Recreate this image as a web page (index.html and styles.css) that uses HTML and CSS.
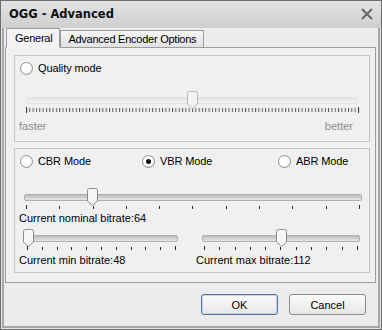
FILE: index.html
```html
<!DOCTYPE html>
<html>
<head>
<meta charset="utf-8">
<link rel="stylesheet" href="styles.css">
</head>
<body>
<div class="window">
  <div class="titlebar">
    <span class="title">OGG - Advanced</span>
    <svg class="close" width="14" height="14" viewBox="0 0 14 14"><path d="M2 2L12 12M12 2L2 12" stroke="#6a6a6a" stroke-width="2.2"/></svg>
  </div>
  <div class="client">
    <div class="tabs">
      <div class="tab active">General</div>
      <div class="tab">Advanced Encoder Options</div>
    </div>
    <div class="panel">
      <div class="group g1">
        <label class="radio"><span class="rb"></span>Quality mode</label>
        <div class="slider wide q">
          <div class="track"></div>
          <svg class="thumb" style="left:161px" width="11" height="18" viewBox="0 0 11 18"><path d="M0.5 2.5Q0.5 0.5 2.5 0.5H8.5Q10.5 0.5 10.5 2.5V13L5.5 17.5L0.5 13Z" fill="#f4f4f4" stroke="#b8b8b8"/></svg>
          <svg class="ticks" width="334" height="7" viewBox="0 0 334 7">
            <defs><pattern id="tp" width="3.32" height="7" patternUnits="userSpaceOnUse"><rect x="0" y="1" width="1" height="4" fill="#5a5a5a"/></pattern></defs>
            <rect x="0" y="0" width="334" height="7" fill="url(#tp)"/>
            <rect x="0" y="0" width="1" height="6" fill="#3a3a3a"/>
            <rect x="332" y="0" width="1" height="6" fill="#3a3a3a"/>
          </svg>
          <div class="ends"><span>faster</span><span>better</span></div>
        </div>
      </div>
      <div class="group g2">
        <div class="radios">
          <label class="radio r1"><span class="rb"></span>CBR Mode</label>
          <label class="radio r2"><span class="rb on"></span>VBR Mode</label>
          <label class="radio r3"><span class="rb"></span>ABR Mode</label>
        </div>
        <div class="slider nominal">
          <div class="track"></div>
          <svg class="thumb" style="left:63px" width="11" height="18" viewBox="0 0 11 18"><path d="M0.5 2.5Q0.5 0.5 2.5 0.5H8.5Q10.5 0.5 10.5 2.5V13L5.5 17.5L0.5 13Z" fill="#f6f6f6" stroke="#8a8a8a"/></svg>
          <div class="cticks n11"><i></i><i></i><i></i><i></i><i></i><i></i><i></i><i></i><i></i><i></i><i></i></div>
        </div>
        <div class="caption">Current nominal bitrate:64</div>
        <div class="pair">
          <div class="half">
            <div class="slider small">
              <div class="track"></div>
              <svg class="thumb" style="left:-2px" width="11" height="18" viewBox="0 0 11 18"><path d="M0.5 2.5Q0.5 0.5 2.5 0.5H8.5Q10.5 0.5 10.5 2.5V13L5.5 17.5L0.5 13Z" fill="#f6f6f6" stroke="#8a8a8a"/></svg>
              <div class="cticks"><i></i><i></i><i></i><i></i><i></i><i></i><i></i><i></i><i></i><i></i><i></i></div>
            </div>
            <div class="caption">Current min bitrate:48</div>
          </div>
          <div class="half">
            <div class="slider small">
              <div class="track"></div>
              <svg class="thumb" style="left:74px" width="11" height="18" viewBox="0 0 11 18"><path d="M0.5 2.5Q0.5 0.5 2.5 0.5H8.5Q10.5 0.5 10.5 2.5V13L5.5 17.5L0.5 13Z" fill="#f6f6f6" stroke="#8a8a8a"/></svg>
              <div class="cticks"><i></i><i></i><i></i><i></i><i></i><i></i><i></i><i></i><i></i><i></i><i></i></div>
            </div>
            <div class="caption">Current max bitrate:112</div>
          </div>
        </div>
      </div>
    </div>
    <div class="footer">
      <button class="btn default">OK</button>
      <button class="btn">Cancel</button>
    </div>
  </div>
</div>
</body>
</html>
```
FILE: styles.css
```css
html, body { margin: 0; padding: 0; background: #ffffff; }
body { font-family: "Liberation Sans", Arial, sans-serif; font-size: 11px; color: #000; }
.window {
  width: 382px; height: 330px; box-sizing: border-box;
  border: 1px solid #6e6e6e;
  background: #ececec;
  box-shadow: inset 0 0 0 1px #e4e4e4, inset 0 0 0 3px #a8a8a8;
  display: flex; flex-direction: column;
}
.titlebar {
  height: 27px; display: flex; align-items: center; justify-content: space-between;
  padding: 0 7px 0 8px;
  background: linear-gradient(#e2e2e2, #cfcfcf);
}
.title { font-family: "DejaVu Sans", sans-serif; font-weight: bold; font-size: 11.5px; color: #111; margin-top: -2px; }
.close { margin-top: -2px; }
.client { flex: 1; padding: 0 4px 0 4px; display: flex; flex-direction: column; }
.tabs { height: 19px; display: flex; align-items: flex-end; position: relative; z-index: 1; }
.tab {
  height: 17px; box-sizing: border-box; padding: 2px 7px 0 7px;
  border: 1px solid #9c9c9c; border-bottom: 0;
  background: linear-gradient(#f4f4f4, #e2e2e2);
  margin-left: -1px; font-size: 11px; letter-spacing: -0.25px;
}
.tab.active {
  height: 20px; margin-left: 1px; padding: 3px 7px 0 8px; background: #f4f4f4; border-color: #9c9c9c; margin-bottom: -1px;
  border-bottom: 1px solid #f4f4f4;
}
.tab.active + .tab { margin-left: 0; }
.panel {
  height: 236px; box-sizing: border-box; margin-right: 1px;
  border: 1px solid #9c9c9c; background: #f0f0f0;
  padding: 7px 5px 0 8px;
  display: flex; flex-direction: column; gap: 6px;
}
.group { border: 1px solid #c4c4c4; box-sizing: border-box; }
.g1 { height: 87px; padding: 4px 10px 0 5px; }
.g2 { height: 125px; padding: 4px 9px 0 4px; }
.radio { display: flex; align-items: center; gap: 5px; height: 16px; font-size: 11px; letter-spacing: -0.1px; }
.rb {
  width: 11px; height: 11px; border-radius: 50%; border: 1px solid #8f8f8f;
  background: radial-gradient(circle at 40% 40%, #ffffff 40%, #e4e4e4);
  display: inline-block; position: relative;
}
.rb.on::after {
  content: ""; position: absolute; left: 3px; top: 3px; width: 5px; height: 5px; border-radius: 50%; background: #111;
}
.slider { position: relative; }
.track {
  height: 5px; border-radius: 2px; background: linear-gradient(#d8d8d8, #f0f0f0); border: 1px solid #dcdcdc; border-top-color: #c8c8c8;
}
.slider.q { margin: 21px 0 0 6px; width: 334px; }
.slider.q .track { width: 330px; border-color: #e2e2e2; background: linear-gradient(#e0e0e0, #f6f6f6); }
.slider .thumb { position: absolute; top: -6px; }
.ticks { display: block; margin-top: 3px; }
.ends { display: flex; justify-content: space-between; color: #8c8c8c; margin-top: 6px; width: 334px; margin-left: -7px; font-size: 11px; }
.radios { position: relative; height: 16px; }
.radios .radio { position: absolute; top: 0; }
.r1 { left: 1px; } .r2 { left: 123px; } .r3 { left: 259px; }
.slider.nominal { margin: 25px 0 0 5px; width: 338px; }
.slider.nominal .track { width: 336px; background: linear-gradient(#bcbcbc, #e8e8e8); border-color: #b0b0b0; }
.cticks { display: flex; justify-content: space-between; padding: 0 2px 0 2px; margin-top: 4px; height: 6px; }
.cticks i { display: block; width: 1px; height: 3px; background: #2a2a2a; margin-top: 1px; }
.cticks i:first-child, .cticks i:last-child { height: 4px; margin-top: 0; }
.caption { font-size: 11px; margin-top: 1px; }
.pair { display: flex; gap: 22px; margin-top: 11px; }
.half { width: 155px; }
.half + .half { width: 165px; }
.slider.small { margin-left: 6px; width: 153px; }
.half + .half .slider.small { width: 158px; }
.slider.small .track { background: linear-gradient(#bcbcbc, #e8e8e8); border-color: #b0b0b0; }
.pair .caption { margin-top: 2px; }
.footer { flex: 1; display: flex; justify-content: flex-end; align-items: flex-start; gap: 11px; padding: 11px 11px 0 0; }
.btn {
  width: 77px; height: 21px; font-family: "Liberation Sans", Arial, sans-serif; font-size: 11px;
  border: 1px solid #8a8a8a; border-radius: 3px;
  background: linear-gradient(#fbfbfb, #e6e6e6); color: #000; padding: 0;
}
.btn.default { border-color: #5a6e8e; box-shadow: inset 0 0 0 1px #c6d4ea; }
```
